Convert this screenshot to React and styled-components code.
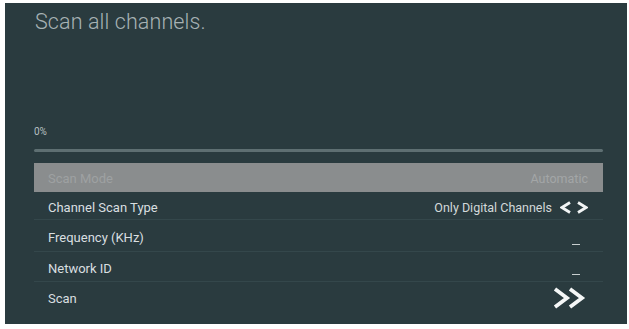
import React from 'react'
import styled, { createGlobalStyle } from 'styled-components'

const Global = createGlobalStyle`
  html, body { margin: 0; padding: 0; background: #ffffff; }
  body { font-family: Roboto, "Noto Sans", sans-serif; }
`

const Screen = styled.div`
  width: 622px;
  height: 321px;
  margin: 3px 0 0 5px;
  background: #2a3b3f;
  box-sizing: border-box;
  padding: 7px 24px 0 29px;
  display: flex;
  flex-direction: column;
`

const Title = styled.h1`
  margin: 0 0 0 1px;
  font-size: 21.5px;
  font-weight: 300;
  color: #a7b2b4;
  letter-spacing: 0.1px;
  line-height: 24px;
`

const Progress = styled.div`
  margin-top: 92px;
  display: flex;
  flex-direction: column;
  gap: 11px;
`

const Percent = styled.span`
  font-size: 10px;
  color: #b7c0c1;
  line-height: 12px;
`

const Track = styled.div`
  height: 3px;
  border-radius: 2px;
  background: #5e6f72;
`

const List = styled.div`
  margin-top: 11px;
  display: flex;
  flex-direction: column;
`

const Row = styled.div`
  height: ${p => p.$h || 30}px;
  box-sizing: border-box;
  display: flex;
  align-items: center;
  justify-content: space-between;
  padding: 3px 15px 0 14px;
  font-size: 13px;
  color: ${p => (p.$active ? '#9ea1a2' : '#d9dfe0')};
  background: ${p => (p.$active ? '#8a8d8e' : 'transparent')};
  border-bottom: 1px solid ${p => (p.$active || p.$last ? 'transparent' : '#34474b')};
`

const Value = styled.div`
  display: flex;
  align-items: center;
  gap: 8px;
  color: ${p => p.$muted ? '#a3a6a7' : '#d3d9da'};
  font-size: 12.5px;
`

const Dash = styled.span`
  align-self: flex-end;
  width: 8px;
  height: 1px;
  margin: 0 8px 6px 0;
  background: #c7cecf;
`

const Arrows = () => (
  <svg width="28" height="13" viewBox="0 0 28 13">
    <path d="M10 1.5L2 6.5l8 5M18 1.5L26 6.5l-8 5" fill="none" stroke="#f2f5f5" strokeWidth="2.8" strokeLinejoin="miter" />
  </svg>
)

const DoubleChevron = () => (
  <svg width="36" height="22" viewBox="0 0 36 22">
    <path d="M3 2l12 9-12 9M18 2l12 9-12 9" fill="none" stroke="#f5f7f7" strokeWidth="3.8" strokeLinejoin="miter" />
  </svg>
)

export default function App() {
  return (
    <>
      <Global />
      <Screen>
        <Title>Scan all channels.</Title>
        <Progress>
          <Percent>0%</Percent>
          <Track />
        </Progress>
        <List>
          <Row $active $h={29}>
            <span>Scan Mode</span>
            <Value $muted>Automatic</Value>
          </Row>
          <Row $h={28}>
            <span>Channel Scan Type</span>
            <Value>
              Only Digital Channels
              <Arrows />
            </Value>
          </Row>
          <Row $h={32}>
            <span>Frequency (KHz)</span>
            <Dash />
          </Row>
          <Row $h={30}>
            <span>Network ID</span>
            <Dash />
          </Row>
          <Row $last $h={30}>
            <span>Scan</span>
            <DoubleChevron />
          </Row>
        </List>
      </Screen>
    </>
  )
}
